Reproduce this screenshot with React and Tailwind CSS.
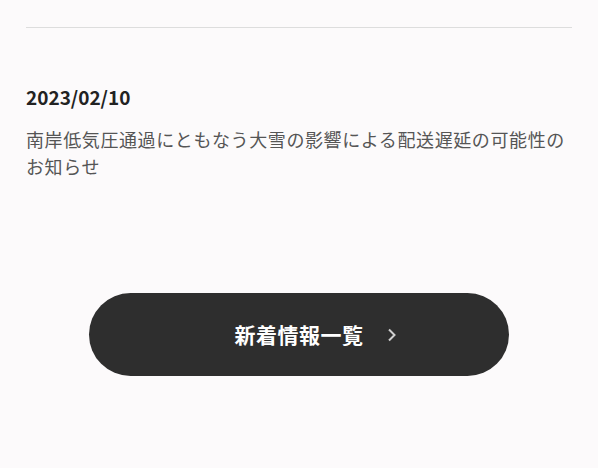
const App = () => {
    return (
        <div
            className="min-h-[468px] bg-[#fcfafb] px-[26px] pt-[27px]"
            style={{ fontFamily: '"Noto Sans CJK JP", "Noto Sans", sans-serif' }}
        >
            <div className="border-t border-[#dddddd]" />

            {/* News item */}
            <div className="pt-[56px]">
                <p className="text-[19px] font-bold leading-[26px] text-[#222222]">2023/02/10</p>
                <p className="mt-[16px] text-[18px] leading-[27px] tracking-[0.6px] text-[#555555]">
                    南岸低気圧通過にともなう大雪の影響による配送遅延の可能性のお知らせ
                </p>
            </div>

            {/* More button */}
            <div className="flex justify-center pt-[113px]">
                <a
                    href="#"
                    className="flex h-[83px] w-[420px] items-center justify-center rounded-full bg-[#2e2e2e] text-white"
                >
                    <span className="relative text-[21px] font-bold tracking-[0.5px]">
                        新着情報一覧
                        <svg
                            className="absolute left-full top-1/2 ml-[23px] -translate-y-1/2"
                            width="10"
                            height="14"
                            viewBox="0 0 10 14"
                            fill="none"
                            stroke="#cfcfcf"
                            strokeWidth="2"
                        >
                            <path d="M2 1.5 7.5 7 2 12.5" />
                        </svg>
                    </span>
                </a>
            </div>
        </div>
    );
};

export default App;
